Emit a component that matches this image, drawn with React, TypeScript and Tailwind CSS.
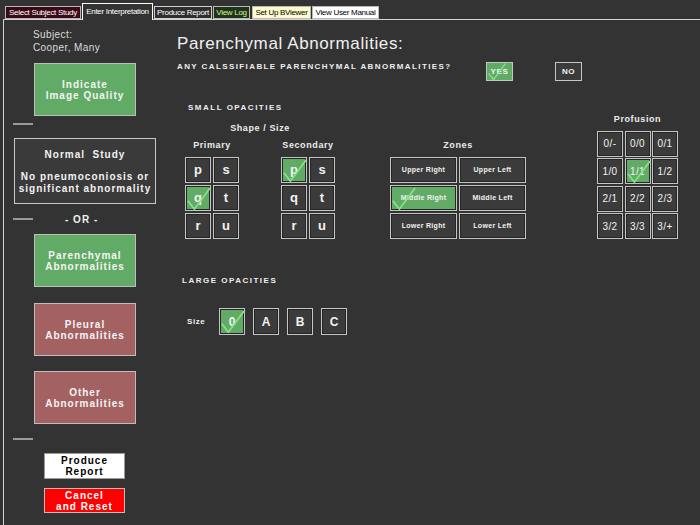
import React from "react";

function Check({ className }: { className: string }) {
  return (
    <svg
      className={`pointer-events-none absolute ${className}`}
      viewBox="0 0 26 26"
      fill="none"
    >
      <path d="M1 15 L8 24 L25 1" stroke="#86e686" strokeWidth="1.8" />
    </svg>
  );
}

function Cell({
  label,
  checked,
  size,
  text,
}: {
  label: string;
  checked?: boolean;
  size: string;
  text: string;
}) {
  return (
    <div
      className={`relative flex items-center justify-center border border-[#c4c4c4] shadow-[inset_0_0_0_1px_#262626] text-[#f2f2f2] ${size} ${text} ${
        checked ? "bg-[#62ab67]" : "bg-[#3b3b3b]"
      }`}
    >
      {label}
      {checked && <Check className="left-[1px] top-[1px] w-[24px] h-[24px]" />}
    </div>
  );
}

function ShapeGroup({ title, checked }: { title: string; checked: string }) {
  const letters = ["p", "s", "q", "t", "r", "u"];
  return (
    <div className="flex flex-col items-center">
      <div className="text-[9px] font-bold leading-[10px] tracking-[0.6px] text-[#ececec]">
        {title}
      </div>
      <div className="mt-[7px] grid grid-cols-2 gap-[2px]">
        {letters.map((l) => (
          <Cell
            key={l}
            label={l}
            checked={l === checked}
            size="w-[26px] h-[26px]"
            text="text-[13px] font-bold"
          />
        ))}
      </div>
    </div>
  );
}

function SideButton({
  lines,
  color,
  className,
}: {
  lines: string[];
  color: string;
  className: string;
}) {
  return (
    <div
      className={`flex flex-col items-center justify-center border border-[#bdbdbd] text-[10px] font-bold leading-[11px] tracking-[1px] text-[#f4f4f4] ${color} ${className}`}
    >
      {lines.map((l) => (
        <div key={l}>{l}</div>
      ))}
    </div>
  );
}

function Rule() {
  return <div className="ml-[9px] h-[2px] w-[20px] bg-[#9a9a9a]" />;
}

const tabs = [
  { label: "Select Subject Study", cls: "w-[76px] h-[13px] bg-[#3c0816] text-white border-[#b8b8b8]" },
  { label: "Enter Interpretation", cls: "w-[71px] bg-[#333333] text-white border-white border-b-0 z-10 -mb-[1px] h-[17px]" },
  { label: "Produce Report", cls: "w-[58px] h-[13px] bg-[#2e2e2e] text-white border-[#d0d0d0]" },
  { label: "View Log", cls: "w-[37px] h-[13px] bg-[#1e351c] text-[#dcf08e] border-[#b8b8b8]" },
  { label: "Set Up BViewer", cls: "w-[59px] h-[13px] bg-[#fffbcd] text-black border-[#b8b8b8] ml-[1px]" },
  { label: "View User Manual", cls: "w-[67px] h-[13px] bg-white text-black border-[#b8b8b8]" },
];

export default function App() {
  const zones = [
    "Upper Right",
    "Upper Left",
    "Middle Right",
    "Middle Left",
    "Lower Right",
    "Lower Left",
  ];
  const profusion = [
    "0/-", "0/0", "0/1",
    "1/0", "1/1", "1/2",
    "2/1", "2/2", "2/3",
    "3/2", "3/3", "3/+",
  ];

  return (
    <div className="flex h-[525px] w-[700px] flex-col overflow-hidden bg-[#333333] font-['Liberation_Sans',Arial,sans-serif] text-[#eaeaea]">
      {/* tab strip */}
      <div className="flex h-[19px] items-end gap-[1px] pl-[5px]">
        {tabs.map((t) => (
          <div
            key={t.label}
            className={`flex items-center justify-center border text-[8px] leading-[10px] tracking-[-0.3px] whitespace-nowrap ${t.cls}`}
          >
            {t.label}
          </div>
        ))}
      </div>

      <div className="ml-[3px] flex flex-1 border-l border-t border-[#d4d4d4]">
        {/* left column */}
        <div className="flex w-[163px] flex-col">
          <div className="ml-[29px] mt-[8px] text-[10px] leading-[13px] tracking-[0.4px] text-[#dcdcdc]">
            <div>Subject:</div>
            <div>Cooper, Many</div>
          </div>

          <SideButton
            lines={["Indicate", "Image Quality"]}
            color="bg-[#62ab67]"
            className="ml-[30px] mt-[9px] h-[53px] w-[102px]"
          />

          <div className="mt-[7px]">
            <Rule />
          </div>

          <div className="ml-[10px] mt-[13px] flex h-[66px] w-[142px] flex-col items-center border border-[#c8c8c8] bg-[#3a3a3a] text-[10px] font-bold leading-[12px] tracking-[1px] text-[#f2f2f2]">
            <div className="mt-[10px] whitespace-pre">Normal  Study</div>
            <div className="mt-[10px]">No pneumoconiosis or</div>
            <div>significant abnormality</div>
          </div>

          <div className="mt-[9px] flex h-[12px] items-center">
            <Rule />
            <div className="ml-[32px] text-[10px] font-bold tracking-[1px] text-[#f0f0f0]">
              - OR -
            </div>
          </div>

          <SideButton
            lines={["Parenchymal", "Abnormalities"]}
            color="bg-[#62ab67]"
            className="ml-[30px] mt-[9px] h-[53px] w-[102px]"
          />
          <SideButton
            lines={["Pleural", "Abnormalities"]}
            color="bg-[#a36162]"
            className="ml-[30px] mt-[16px] h-[53px] w-[102px]"
          />
          <SideButton
            lines={["Other", "Abnormalities"]}
            color="bg-[#a36162]"
            className="ml-[30px] mt-[15px] h-[53px] w-[102px]"
          />

          <div className="mt-[14px]">
            <Rule />
          </div>

          <div className="ml-[40px] mt-[13px] flex h-[26px] w-[81px] flex-col items-center justify-center border border-[#9a9a9a] bg-white text-[10px] font-bold leading-[11px] tracking-[1px] text-black">
            <div>Produce</div>
            <div>Report</div>
          </div>
          <div className="ml-[40px] mt-[9px] flex h-[25px] w-[81px] flex-col items-center justify-center border border-[#bdbdbd] bg-[#ff0000] text-[10px] font-bold leading-[11px] tracking-[1px] text-white">
            <div>Cancel</div>
            <div>and Reset</div>
          </div>
        </div>

        {/* right content */}
        <div className="flex flex-1 flex-col pl-[10px]">
          <div className="mt-[14px] text-[17px] leading-[19px] tracking-[0.6px] text-[#f0f0f0]">
            Parenchymal Abnormalities:
          </div>

          <div className="mt-[9px] flex items-start">
            <div className="w-[309px] text-[8px] font-bold leading-[10px] tracking-[1.4px] text-[#eeeeee]">
              ANY CALSSIFIABLE PARENCHYMAL ABNORMALITIES?
            </div>
            <div className="relative flex h-[19px] w-[27px] items-center justify-center border border-[#c4c4c4] bg-[#62ab67] text-[8px] font-bold tracking-[0.6px] text-[#f2f2f2]">
              YES
              <Check className="left-0 top-0 w-[20px] h-[18px]" />
            </div>
            <div className="ml-[42px] flex h-[19px] w-[27px] items-center justify-center border border-[#c4c4c4] bg-[#3b3b3b] text-[8px] font-bold tracking-[0.6px] text-[#f2f2f2]">
              NO
            </div>
          </div>

          {/* small opacities */}
          <div className="mt-[20px] flex items-end">
            <div className="flex flex-col">
              <div className="ml-[11px] mt-[2px] text-[8px] font-bold leading-[10px] tracking-[1.5px] text-[#eeeeee]">
                SMALL OPACITIES
              </div>
              <div className="ml-[8px] mt-[10px] w-[150px] text-center text-[9px] font-bold leading-[10px] tracking-[0.6px] text-[#ececec]">
                Shape / Size
              </div>
              <div className="ml-[8px] mt-[7px] flex items-end">
                <ShapeGroup title="Primary" checked="q" />
                <div className="ml-[42px]">
                  <ShapeGroup title="Secondary" checked="p" />
                </div>
                <div className="ml-[55px] flex flex-col items-center">
                  <div className="text-[9px] font-bold leading-[10px] tracking-[0.6px] text-[#ececec]">
                    Zones
                  </div>
                  <div className="mt-[7px] grid grid-cols-2 gap-[2px]">
                    {zones.map((z) => (
                      <Cell
                        key={z}
                        label={z}
                        checked={z === "Middle Right"}
                        size="w-[67px] h-[26px]"
                        text="text-[7px] font-bold tracking-[0.3px]"
                      />
                    ))}
                  </div>
                </div>
              </div>
            </div>

            <div className="ml-[71px] flex flex-col items-center">
              <div className="text-[9px] font-bold leading-[10px] tracking-[0.6px] text-[#ececec]">
                Profusion
              </div>
              <div className="mt-[7px] grid grid-cols-3 gap-[1.5px]">
                {profusion.map((p) => (
                  <Cell
                    key={p}
                    label={p}
                    checked={p === "1/1"}
                    size="w-[26px] h-[26px]"
                    text="text-[10px] tracking-[0.4px]"
                  />
                ))}
              </div>
            </div>
          </div>

          {/* large opacities */}
          <div className="ml-[5px] mt-[37px] text-[8px] font-bold leading-[10px] tracking-[1.5px] text-[#eeeeee]">
            LARGE OPACITIES
          </div>
          <div className="ml-[10px] mt-[22px] flex items-center">
            <div className="w-[32px] text-[8px] font-bold tracking-[0.6px] text-[#eeeeee]">
              Size
            </div>
            <div className="flex gap-[8px]">
              {["0", "A", "B", "C"].map((s) => (
                <Cell
                  key={s}
                  label={s}
                  checked={s === "0"}
                  size="w-[26px] h-[27px]"
                  text="text-[12px] font-bold"
                />
              ))}
            </div>
          </div>
        </div>
      </div>
    </div>
  );
}
